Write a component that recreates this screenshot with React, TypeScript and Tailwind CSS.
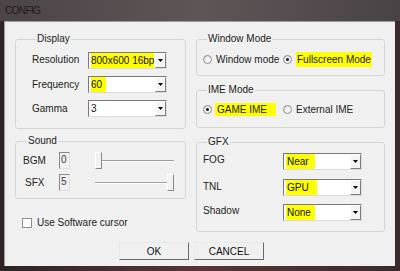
import React from "react";

const font = { fontFamily: '"Liberation Sans", Arial, sans-serif' };

function Hl({ children, extra = "pr-[4px]" }: { children: React.ReactNode; extra?: string }) {
  return <span className={`bg-[#ffff00] ${extra}`}>{children}</span>;
}

function Combo({ children }: { children: React.ReactNode }) {
  return (
    <div className="flex w-[79px] h-[17px] bg-white border border-t-[#7a7a7a] border-l-[#7a7a7a] border-r-[#dcdcdc] border-b-[#dcdcdc]">
      <div className="flex-1 flex items-center pl-[2px] overflow-hidden whitespace-nowrap text-[10px] text-[#111]">
        {children}
      </div>
      <div className="w-[11px] h-[15px] flex items-center justify-center bg-[#f4f4f4] border border-t-white border-l-white border-r-[#7f7f7f] border-b-[#7f7f7f]">
        <svg width="5" height="3" viewBox="0 0 5 3">
          <path d="M0 0h5L2.5 3z" fill="#000" />
        </svg>
      </div>
    </div>
  );
}

function Radio({ on }: { on?: boolean }) {
  return (
    <span className="w-[9px] h-[9px] rounded-full border border-[#8a8a8a] bg-gradient-to-br from-[#e0e0e0] to-white flex items-center justify-center shrink-0">
      {on && <span className="w-[3px] h-[3px] rounded-full bg-[#1a1a1a]" />}
    </span>
  );
}

function Group({
  title,
  className,
  children,
}: {
  title: string;
  className: string;
  children: React.ReactNode;
}) {
  return (
    <fieldset className={`border border-[#d5d5d5] rounded-[3px] ${className}`}>
      <legend className="ml-[4px] px-[1px] text-[10px] leading-[12px] text-[#222]">{title}</legend>
      {children}
    </fieldset>
  );
}

function Slider({ pos }: { pos: "start" | "end" }) {
  return (
    <div className="relative w-[79px] h-[17px] flex items-center">
      <div className="w-full h-[2px] bg-[#a0a0a0] border-b border-white" />
      <div
        className={`absolute top-0 w-[7px] h-[17px] bg-[#f2f2f2] border border-t-white border-l-white border-r-[#8a8a8a] border-b-[#8a8a8a] ${
          pos === "start" ? "left-0" : "right-0"
        }`}
      />
    </div>
  );
}

function NumBox({ v }: { v: string }) {
  return (
    <div className="w-[11px] h-[17px] bg-[#f0f0f0] border border-t-[#8a8a8a] border-l-[#8a8a8a] border-r-[#e0e0e0] border-b-[#e0e0e0] text-[10px] leading-[13px] pl-[1px] text-[#4a3a44]">
      {v}
    </div>
  );
}

function Btn({ children }: { children: React.ReactNode }) {
  return (
    <div className="w-[70px] h-[18px] flex items-center justify-center bg-[#f0f0f0] border border-t-[#e8e8e8] border-l-[#e8e8e8] border-r-[#6a6a6a] border-b-[#6a6a6a] text-[10px] text-[#111]">
      {children}
    </div>
  );
}

export default function App() {
  return (
    <div
      className="w-[400px] h-[271px] flex flex-col bg-gradient-to-r from-[#2e2426] via-[#5a3436] to-[#3a2a2c] overflow-hidden"
      style={font}
    >
      <div className="h-[21px] flex items-center pl-[5px] text-[10px] tracking-[-0.6px] text-[#1c1c1c] bg-gradient-to-r from-[#4c4446] via-[#5e5557] to-[#4a4345]">
        CONFIG
      </div>
      <div className="ml-[4px] w-[391px] h-[245px] bg-[#f0f0f0] border-t border-l border-[#9a9a9a] pt-[11px] pl-[10px]">
        <div className="flex gap-[10px]">
          <div className="flex flex-col w-[171px]">
            <Group title="Display" className="h-[96px] pl-[16px] pt-[7px]">
              <div className="flex flex-col gap-[7px] text-[10px] text-[#222]">
                <div className="flex items-center">
                  <span className="w-[56px] -mt-[3px]">Resolution</span>
                  <Combo>
                    <Hl extra="">800x600 16bp</Hl>
                  </Combo>
                </div>
                <div className="flex items-center">
                  <span className="w-[56px] -mt-[1px]">Frequency</span>
                  <Combo>
                    <Hl>60</Hl>
                  </Combo>
                </div>
                <div className="flex items-center">
                  <span className="w-[56px]">Gamma</span>
                  <Combo>3</Combo>
                </div>
              </div>
            </Group>
            <Group title="Sound" className="mt-[6px] h-[64px] pl-[7px] pt-[5px]">
              <div className="flex flex-col gap-[5px] text-[10px] text-[#222]">
                <div className="flex items-center">
                  <span className="w-[36px]">BGM</span>
                  <NumBox v="0" />
                  <div className="ml-[25px]">
                    <Slider pos="start" />
                  </div>
                </div>
                <div className="flex items-center">
                  <span className="w-[36px] pl-[2px]">SFX</span>
                  <NumBox v="5" />
                  <div className="ml-[25px]">
                    <Slider pos="end" />
                  </div>
                </div>
              </div>
            </Group>
            <div className="flex items-center mt-[16px] pl-[7px] text-[10px] text-[#222]">
              <span className="w-[10px] h-[10px] bg-white border border-[#8e8f8f]" />
              <span className="ml-[5px]">Use Software cursor</span>
            </div>
          </div>
          <div className="flex flex-col w-[189px]">
            <Group title="Window Mode" className="h-[43px] pl-[6px] pt-[7px]">
              <div className="flex items-center text-[10px] text-[#222]">
                <div className="flex items-center w-[80px]">
                  <Radio />
                  <span className="ml-[4px]">Window mode</span>
                </div>
                <div className="flex items-center">
                  <Radio on />
                  <span className="ml-[4px]">
                    <Hl extra="px-[1px] py-[2px]">Fullscreen Mode</Hl>
                  </span>
                </div>
              </div>
            </Group>
            <Group title="IME Mode" className="mt-[8px] h-[44px] pl-[6px] pt-[6px]">
              <div className="flex items-center text-[10px] text-[#222]">
                <div className="flex items-center w-[80px]">
                  <Radio on />
                  <span className="ml-[3px]">
                    <Hl extra="pl-[2px] pr-[9px] py-[1px]">GAME IME</Hl>
                  </span>
                </div>
                <div className="flex items-center">
                  <Radio />
                  <span className="ml-[4px]">External IME</span>
                </div>
              </div>
            </Group>
            <Group title="GFX" className="mt-[8px] h-[96px] pl-[6px] pt-[5px]">
              <div className="flex flex-col text-[10px] text-[#222]">
                <div className="flex items-center">
                  <span className="w-[80px] -mt-[5px]">FOG</span>
                  <Combo>
                    <Hl extra="pl-[1px] pr-[6px]">Near</Hl>
                  </Combo>
                </div>
                <div className="flex items-center mt-[9px]">
                  <span className="w-[80px] -mt-[3px]">TNL</span>
                  <Combo>
                    <Hl extra="pl-[1px] pr-[8px]">GPU</Hl>
                  </Combo>
                </div>
                <div className="flex items-center mt-[8px]">
                  <span className="w-[80px] -mt-[4px]">Shadow</span>
                  <Combo>
                    <Hl extra="pl-[1px] pr-[4px]">None</Hl>
                  </Combo>
                </div>
              </div>
            </Group>
          </div>
        </div>
        <div className="flex gap-[5px] mt-[10px] pl-[104px]">
          <Btn>OK</Btn>
          <Btn>CANCEL</Btn>
        </div>
      </div>
    </div>
  );
}
